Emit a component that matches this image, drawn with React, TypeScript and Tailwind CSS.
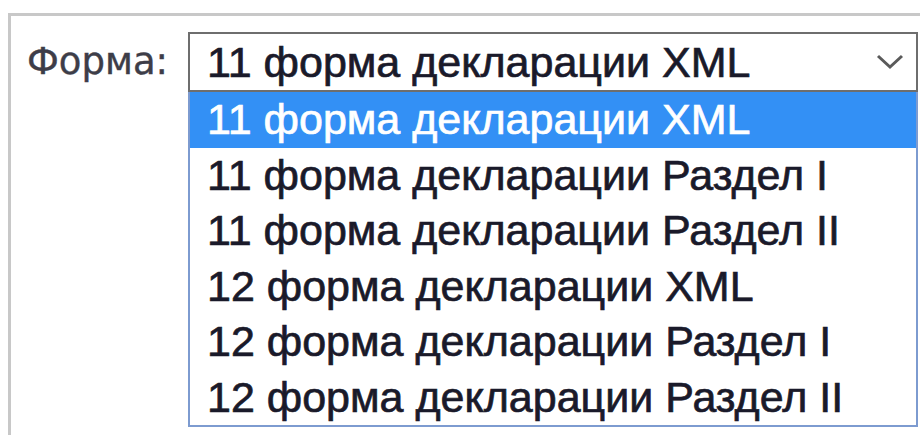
import { useState } from "react";

const forms = [
  "11 форма декларации XML",
  "11 форма декларации Раздел I",
  "11 форма декларации Раздел II",
  "12 форма декларации XML",
  "12 форма декларации Раздел I",
  "12 форма декларации Раздел II",
];

function Chevron() {
  return (
    <svg width="28" height="16" viewBox="0 0 28 16" fill="none">
      <path d="M2 2 L14 13 L26 2" stroke="#5a5a5a" strokeWidth="3" />
    </svg>
  );
}

export default function App() {
  const [selected, setSelected] = useState(0);
  const [hover, setHover] = useState(0);

  return (
    <div className="w-[920px] h-[435px] overflow-hidden bg-white pl-[8px] pt-[13px]">
      <div className="h-[500px] w-[1000px] border-l-[3px] border-t-[3px] border-[#c8c8c8] pl-[16px] pt-[16px]">
        <div className="flex items-start">
          {/* label */}
          <div className="h-[60px] flex items-center w-[161px] shrink-0 font-['DejaVu_Sans',sans-serif] text-[37px] text-[#3d3d48] [-webkit-text-stroke:0.4px_currentColor]">
            Форма:
          </div>

          <div className="w-[730px] font-['Liberation_Sans',Arial,sans-serif] text-[43px] leading-none [-webkit-text-stroke:0.7px_currentColor]">
            {/* closed combo */}
            <div className="h-[60px] border-2 border-[#6e6e6e] bg-white flex items-center justify-between pl-[17px] pr-[12px] text-[#1a1a2a]">
              <span>{forms[selected]}</span>
              <Chevron />
            </div>

            {/* open list */}
            <div className="border-2 border-t-0 border-[#7d9bd0] bg-white">
              {forms.map((f, i) => (
                <div
                  key={f}
                  onMouseEnter={() => setHover(i)}
                  onClick={() => setSelected(i)}
                  className={`h-[55.5px] flex items-center pl-[17px] ${
                    hover === i ? "bg-[#3390f5] text-white" : "text-[#1a1a2a]"
                  }`}
                >
                  {f}
                </div>
              ))}
            </div>
          </div>
        </div>
      </div>
    </div>
  );
}
